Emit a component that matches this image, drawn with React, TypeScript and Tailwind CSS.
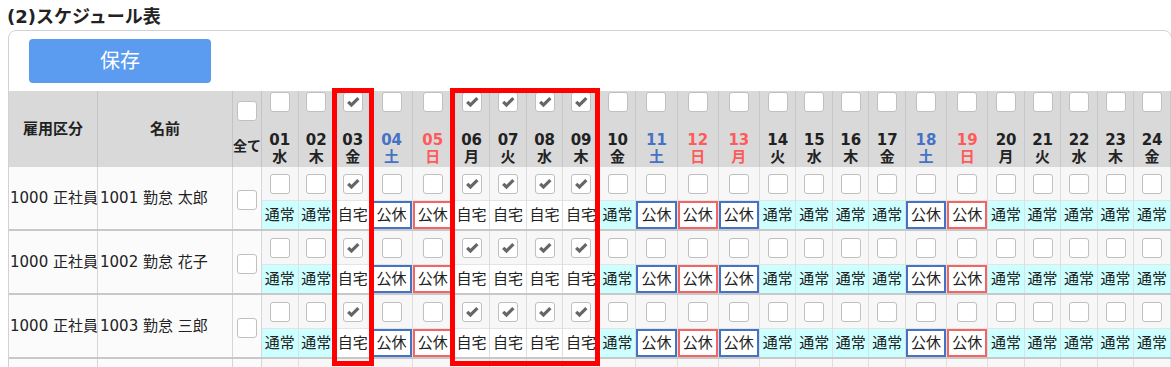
const WEEK = ["水", "木", "金", "土", "日", "月", "火"];

type Kind = "normal" | "sat" | "sun" | "hol";
type Day = { d: string; w: string; kind: Kind; home: boolean };

// only the days that fit in the visible area
const days: Day[] = Array.from({ length: 24 }, (_, i) => {
  const n = i + 1;
  const w = WEEK[i % 7];
  const kind: Kind = w === "土" ? "sat" : w === "日" ? "sun" : n === 13 ? "hol" : "normal";
  return { d: String(n).padStart(2, "0"), w, kind, home: [3, 6, 7, 8, 9].includes(n) };
});

const staff = [
  { code: "1001 勤怠 太郎" },
  { code: "1002 勤怠 花子" },
  { code: "1003 勤怠 三郎" },
];

function colWidth(day: Day) {
  return day.kind === "normal" ? "w-[36.5px]" : "w-[41.2px]";
}

function dateColor(day: Day) {
  if (day.kind === "sat") return "text-[#4472c4]";
  if (day.kind === "sun" || day.kind === "hol") return "text-[#ff5a5a]";
  return "text-[#222]";
}

function CheckBox({ on }: { on: boolean }) {
  return (
    <span className="flex h-[20px] w-[20px] shrink-0 items-center justify-center rounded-[3px] border border-[#c0c0c0] bg-white">
      {on && (
        <svg viewBox="0 0 20 20" className="h-[19px] w-[19px]">
          <path d="M3.4 10.6 L5.9 8.1 L8.3 10.4 L14.7 3.9 L17.2 6.4 L8.3 15.3 Z" fill="#666" />
        </svg>
      )}
    </span>
  );
}

function StatusCell({ day }: { day: Day }) {
  if (day.kind !== "normal") {
    const border = day.kind === "sun" ? "border-[#f26565]" : "border-[#4472c4]";
    return (
      <div className={`flex h-[28px] items-center justify-center border-2 bg-white ${border}`}>公休</div>
    );
  }
  if (day.home) {
    return <div className="flex h-[28px] items-center justify-center bg-white">自宅</div>;
  }
  return <div className="flex h-[28px] items-center justify-center bg-[#ccffff]">通常</div>;
}

export default function App() {
  return (
    <div className="h-[367px] w-[1171px] overflow-hidden bg-white font-['DejaVu_Sans','Noto_Sans_CJK_JP',sans-serif] text-[#222]">
      <div className="h-[30px] pl-[7px] pt-[6px] text-[18px] font-bold leading-[22px]">(2)スケジュール表</div>

      <div className="relative ml-[8px] w-max rounded-t-[8px] border border-[#d2d2d2]">
        <div className="pl-[20px] pt-[8px]">
          <button className="flex h-[44px] w-[182px] items-center justify-center rounded-[4px] bg-[#5b9cf0] text-[20px] text-white">
            保存
          </button>
        </div>

        <div className="mt-[8px]">
          {/* header */}
          <div className="flex h-[76px] bg-[#d9d9d9] text-[15px] font-bold">
            <div className="flex w-[89px] shrink-0 items-center justify-center border-r border-[#c4c4c4]">雇用区分</div>
            <div className="flex w-[135px] shrink-0 items-center justify-center border-r border-[#c4c4c4]">名前</div>
            <div className="flex w-[29px] shrink-0 flex-col items-center border-r border-[#c4c4c4] pt-[10px]">
              <CheckBox on={false} />
              <span className="mt-[17px] whitespace-nowrap text-[14px] leading-[17px]">全て</span>
            </div>
            {days.map((day) => (
              <div
                key={day.d}
                className={`flex shrink-0 flex-col items-center border-r border-[#c8c8c8] pb-[1px] pt-[1px] ${colWidth(day)}`}
              >
                <CheckBox on={day.home} />
                <div className={`mt-auto text-center leading-[17px] ${dateColor(day)}`}>
                  <div>{day.d}</div>
                  <div>{day.w}</div>
                </div>
              </div>
            ))}
          </div>

          {/* rows */}
          {staff.map((s) => (
            <div key={s.code} className="flex h-[64px] border-b-2 border-[#c8c8c8] text-[15px]">
              <div className="flex w-[89px] shrink-0 items-center whitespace-nowrap border-r border-[#d6d6d6] bg-[#fbfbfb] pl-[1px]">
                1000 正社員
              </div>
              <div className="flex w-[135px] shrink-0 items-center whitespace-nowrap border-r border-[#d6d6d6] bg-[#fbfbfb] pl-[2px]">
                {s.code}
              </div>
              <div className="flex w-[29px] shrink-0 items-center justify-center border-r border-[#d6d6d6] bg-[#fbfbfb] pt-[4px]">
                <CheckBox on={false} />
              </div>
              {days.map((day) => (
                <div key={day.d} className={`flex shrink-0 flex-col border-r border-[#dedede] ${colWidth(day)}`}>
                  <div className="flex h-[34px] justify-center border-b border-[#e4e4e4] bg-[#f7f7f7] pt-[7px]">
                    <CheckBox on={day.home} />
                  </div>
                  <StatusCell day={day} />
                </div>
              ))}
            </div>
          ))}
          {/* next row, mostly below the visible area */}
          <div className="flex h-[64px]">
            <div className="w-[89px] shrink-0 border-r border-[#d6d6d6] bg-[#fbfbfb]" />
            <div className="w-[135px] shrink-0 border-r border-[#d6d6d6] bg-[#fbfbfb]" />
            <div className="w-[29px] shrink-0 border-r border-[#d6d6d6] bg-[#fbfbfb]" />
            {days.map((day) => (
              <div key={day.d} className={`shrink-0 border-r border-[#dedede] bg-[#f7f7f7] ${colWidth(day)}`} />
            ))}
          </div>
        </div>

        {/* annotation boxes */}
        <div className="pointer-events-none absolute left-[323px] top-[57px] h-[278px] w-[42px] border-[5px] border-[#ff0000]" />
        <div className="pointer-events-none absolute left-[441px] top-[57px] h-[278px] w-[149.5px] border-[5px] border-[#ff0000]" />
      </div>
    </div>
  );
}
